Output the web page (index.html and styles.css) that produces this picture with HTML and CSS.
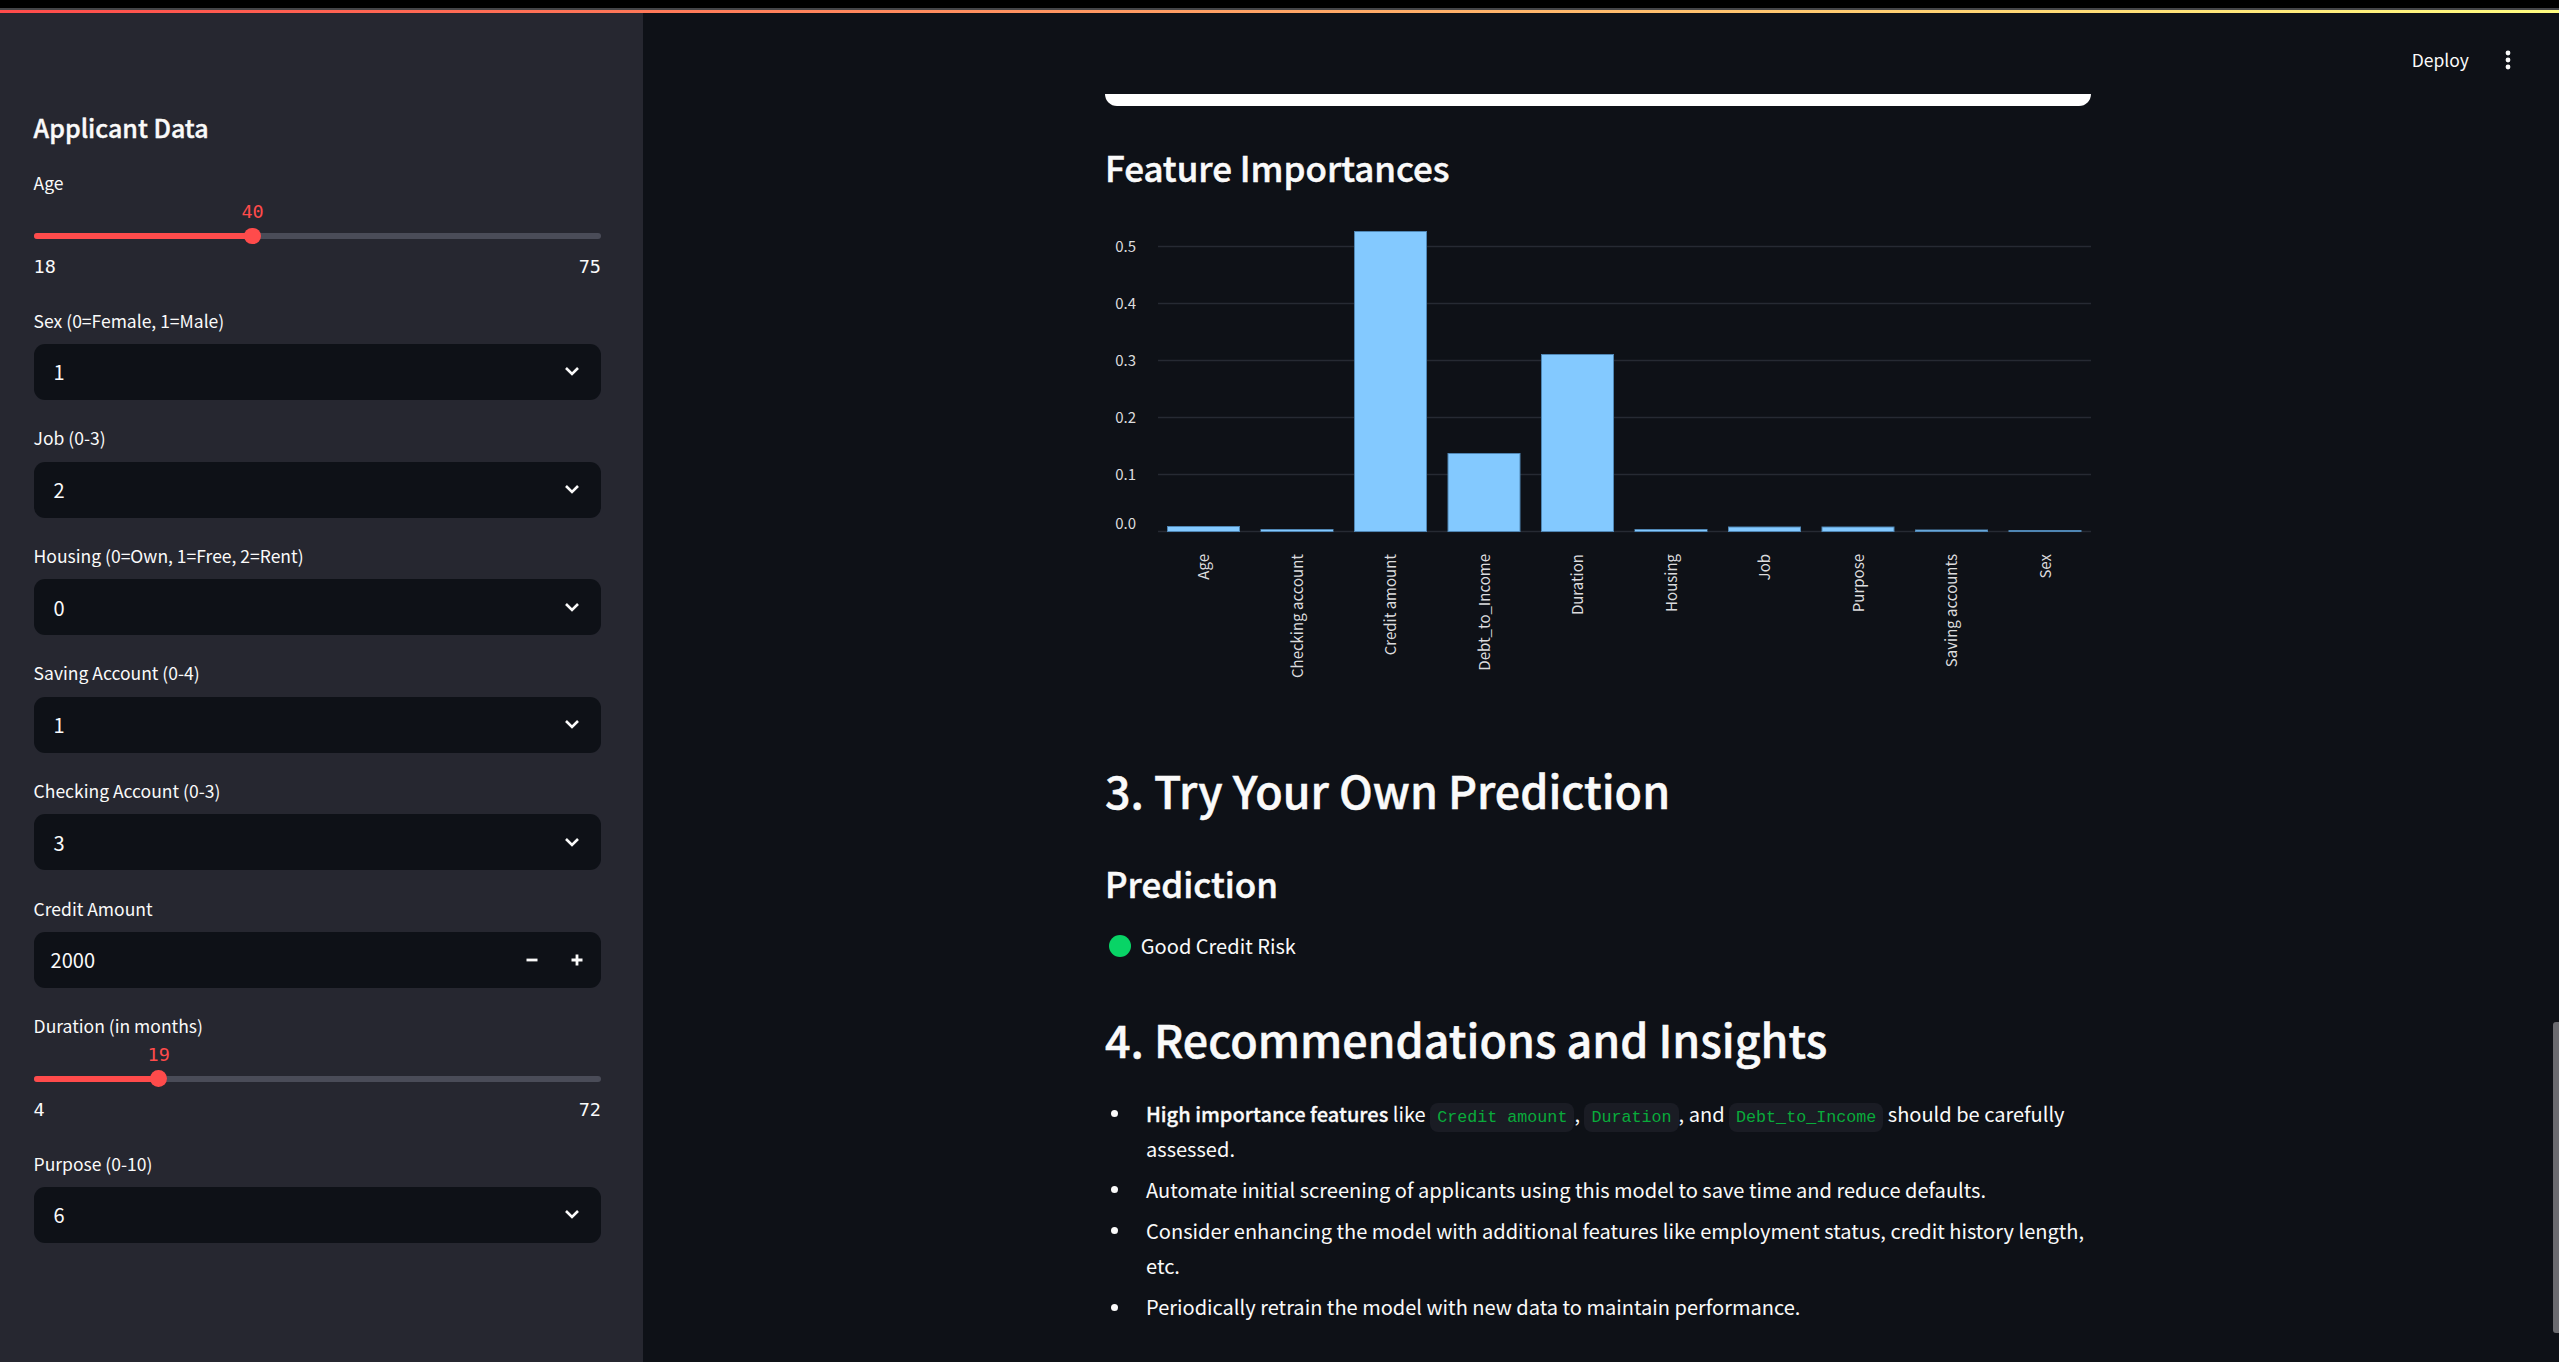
FILE: index.html
```html
<!DOCTYPE html>
<html lang="en">
<head>
<meta charset="utf-8">
<title>Credit Risk</title>
<link rel="stylesheet" href="styles.css">
</head>
<body>
<div class="chrome-line"></div>
<div class="gradient-line"></div>
<div class="app">
  <aside class="sidebar">
    <h2 class="side-title">Applicant Data</h2>
    <div class="field">
      <div class="label">Age</div>
      <div class="slider">
        <div class="track"><div class="fill" style="width:38.6%"></div>
          <div class="thumb" style="left:38.6%"><span class="tick">40</span></div></div>
        <div class="range"><span>18</span><span>75</span></div>
      </div>
    </div>
    <div class="field">
      <div class="label">Sex (0=Female, 1=Male)</div>
      <div class="control select"><span>1</span><svg class="chev" viewBox="0 0 16 10"><path d="M2 2l6 6 6-6"/></svg></div>
    </div>
    <div class="field">
      <div class="label">Job (0-3)</div>
      <div class="control select"><span>2</span><svg class="chev" viewBox="0 0 16 10"><path d="M2 2l6 6 6-6"/></svg></div>
    </div>
    <div class="field">
      <div class="label">Housing (0=Own, 1=Free, 2=Rent)</div>
      <div class="control select"><span>0</span><svg class="chev" viewBox="0 0 16 10"><path d="M2 2l6 6 6-6"/></svg></div>
    </div>
    <div class="field">
      <div class="label">Saving Account (0-4)</div>
      <div class="control select"><span>1</span><svg class="chev" viewBox="0 0 16 10"><path d="M2 2l6 6 6-6"/></svg></div>
    </div>
    <div class="field">
      <div class="label">Checking Account (0-3)</div>
      <div class="control select"><span>3</span><svg class="chev" viewBox="0 0 16 10"><path d="M2 2l6 6 6-6"/></svg></div>
    </div>
    <div class="field">
      <div class="label">Credit Amount</div>
      <div class="control number"><span>2000</span>
        <div class="steppers">
          <svg class="step" viewBox="0 0 12 12"><path d="M0.5 6h11"/></svg>
          <svg class="step" viewBox="0 0 12 12"><path d="M0.5 6h11M6 0.5v11"/></svg>
        </div>
      </div>
    </div>
    <div class="field">
      <div class="label">Duration (in months)</div>
      <div class="slider">
        <div class="track"><div class="fill" style="width:22.06%"></div>
          <div class="thumb" style="left:22.06%"><span class="tick">19</span></div></div>
        <div class="range"><span>4</span><span>72</span></div>
      </div>
    </div>
    <div class="field">
      <div class="label">Purpose (0-10)</div>
      <div class="control select"><span>6</span><svg class="chev" viewBox="0 0 16 10"><path d="M2 2l6 6 6-6"/></svg></div>
    </div>
  </aside>

  <main class="main">
    <div class="toolbar">
      <span class="deploy">Deploy</span>
      <svg class="kebab" viewBox="0 0 6 20"><circle cx="3" cy="3" r="2.4"/><circle cx="3" cy="10" r="2.4"/><circle cx="3" cy="17" r="2.4"/></svg>
    </div>
    <div class="content">
      <div class="table-end"></div>
      <h3 class="h3 h3-feature">Feature Importances</h3>
      <svg class="chart" viewBox="1105 200 986 500" width="986" height="500">
        <g class="grid">
          <line x1="1158" x2="2091" y1="246.5" y2="246.5"/>
          <line x1="1158" x2="2091" y1="303.5" y2="303.5"/>
          <line x1="1158" x2="2091" y1="360.5" y2="360.5"/>
          <line x1="1158" x2="2091" y1="417.5" y2="417.5"/>
          <line x1="1158" x2="2091" y1="474.5" y2="474.5"/>
          <line x1="1158" x2="2091" y1="531.5" y2="531.5"/>
        </g>
        <g class="ylabels">
          <text x="1136" y="252">0.5</text>
          <text x="1136" y="309">0.4</text>
          <text x="1136" y="366">0.3</text>
          <text x="1136" y="423">0.2</text>
          <text x="1136" y="480">0.1</text>
          <text x="1136" y="529">0.0</text>
        </g>
        <g class="bars">
          <rect x="1167.5" y="526.5" width="72" height="5"/>
          <rect x="1261" y="529.5" width="72" height="2"/>
          <rect x="1354.5" y="231.5" width="72" height="300"/>
          <rect x="1448" y="453.5" width="72" height="78"/>
          <rect x="1541.5" y="354.5" width="72" height="177"/>
          <rect x="1635" y="529.5" width="72" height="2"/>
          <rect x="1728.5" y="527" width="72" height="4.5"/>
          <rect x="1822" y="527" width="72" height="4.5"/>
          <rect x="1915.5" y="530" width="72" height="1.5"/>
          <rect x="2009" y="530.5" width="72" height="1"/>
        </g>
        <g class="xlabels">
          <text transform="translate(1209 554) rotate(-90)">Age</text>
          <text transform="translate(1302.5 554) rotate(-90)">Checking account</text>
          <text transform="translate(1396 554) rotate(-90)">Credit amount</text>
          <text transform="translate(1489.5 554) rotate(-90)">Debt_to_Income</text>
          <text transform="translate(1583 554) rotate(-90)">Duration</text>
          <text transform="translate(1676.5 554) rotate(-90)">Housing</text>
          <text transform="translate(1770 554) rotate(-90)">Job</text>
          <text transform="translate(1863.5 554) rotate(-90)">Purpose</text>
          <text transform="translate(1957 554) rotate(-90)">Saving accounts</text>
          <text transform="translate(2050.5 554) rotate(-90)">Sex</text>
        </g>
      </svg>
      <h2 class="h2 h2-try">3. Try Your Own Prediction</h2>
      <h3 class="h3 h3-pred">Prediction</h3>
      <p class="result"><span class="dot"></span>Good Credit Risk</p>
      <h2 class="h2 h2-rec">4. Recommendations and Insights</h2>
      <ul class="list">
        <li><strong>High importance features</strong> like <code>Credit amount</code>, <code>Duration</code>, and <code>Debt_to_Income</code> <span>should be carefully</span> <span>assessed.</span></li>
        <li>Automate initial screening of applicants using this model to save time and reduce defaults.</li>
        <li><span>Consider enhancing the model with additional features like employment status, credit history length,</span> <span>etc.</span></li>
        <li>Periodically retrain the model with new data to maintain performance.</li>
      </ul>
    </div>
  </main>
  <div class="scrollbar"><div class="scroll-thumb"></div></div>
</div>
</body>
</html>
```

FILE: styles.css
```css
* { box-sizing: border-box; }
html, body { margin: 0; height: 100%; }
body {
  background: #000;
  color: #fafafa;
  font-family: "Noto Sans CJK SC", "Noto Sans", sans-serif;
  font-size: 20.05px;
  overflow: hidden;
  padding-top: 8px;
  display: flex;
  flex-direction: column;
}
.chrome-line { height: 2px; background: #444548; flex: none; }
.gradient-line { height: 3px; flex: none; background: linear-gradient(90deg, #ff4b4b, #fffd80); }
.app { flex: 1; display: flex; min-height: 0; background: #0e1117; }

.sidebar {
  flex: none;
  width: 643px;
  background: #262730;
  padding: 89px 42px 0 33.6px;
  overflow: hidden;
}
.side-title {
  margin: 0 0 15.4px;
  font-size: 25px;
  line-height: 50px;
  font-weight: 500;
  -webkit-text-stroke: 0.4px #fafafa;
}
.field { margin-bottom: 22.4px; }
.label {
  font-size: 17.5px;
  line-height: 32px;
  height: 39.2px;
}
.field:has(.slider) .label { height: 35.2px; }
.slider { padding: 30.4px 0 1.4px; }
.track { position: relative; height: 6px; border-radius: 3px; background: #4a4c58; }
.fill { height: 100%; border-radius: 3px; background: #ff4b4b; }
.thumb {
  position: absolute;
  top: -5.4px;
  width: 16.8px;
  height: 16.8px;
  margin-left: -8.4px;
  border-radius: 50%;
  background: #ff4b4b;
}
.tick {
  position: absolute;
  left: 50%;
  bottom: 18px;
  transform: translateX(-50%);
  font-family: "DejaVu Sans Mono", monospace;
  font-size: 18.5px;
  line-height: 28px;
  color: #ff4b4b;
}
.range {
  display: flex;
  justify-content: space-between;
  margin-top: 14px;
  font-family: "DejaVu Sans Mono", monospace;
  font-size: 18.5px;
  line-height: 28px;
}
.control {
  height: 56px;
  border-radius: 11px;
  background: #0e1117;
  display: flex;
  align-items: center;
  justify-content: space-between;
  line-height: 29px;
}
.select { padding: 0 21.5px 0 20px; }
.chev { width: 16px; height: 10px; fill: none; stroke: #fafafa; stroke-width: 2.6; margin-top: -1px; }
.number { padding: 0 18px 0 17px; }
.steppers { display: flex; gap: 33px; align-items: center; }
.step { width: 12px; height: 12px; fill: none; stroke: #fafafa; stroke-width: 2.8; }

.main { flex: 1; min-width: 0; position: relative; overflow: hidden; }
.toolbar {
  position: absolute;
  top: 28px;
  right: 0;
  display: flex;
  align-items: center;
  gap: 36px;
}
.deploy { font-size: 17.5px; line-height: 38px; }
.kebab { width: 6px; height: 20px; fill: #fafafa; margin-right: 42px; }
.content { width: 986px; margin: 0 auto; padding-top: 81px; }
.table-end { height: 12px; background: #fff; border-radius: 0 0 14px 14px; }
.h3, .h2 { margin: 0; font-weight: 500; -webkit-text-stroke: 0.5px #fafafa; }
.h3 { font-size: 34.9px; line-height: 54px; }
.h2 { font-size: 44.8px; line-height: 70px; }
.h3-feature { margin-top: 34px; }
.chart { display: block; margin-top: 6px; }
.grid line { stroke: #262a33; stroke-width: 1.4; }
.ylabels text { font-size: 15px; fill: #dcdcde; text-anchor: end; }
.bars rect { fill: #83c9ff; stroke: #4f86b4; stroke-width: 1; }
.xlabels text { font-size: 15px; fill: #dcdcde; text-anchor: end; }
.h2-try { margin-top: 55px; }
.h3-pred { margin-top: 31px; }
.result { margin: 18px 0 0; line-height: 36px; display: flex; align-items: center; }
.dot { width: 22px; height: 22px; border-radius: 50%; background: #08d466; margin: 0 9.5px 0 4.3px; }
.h2-rec { margin-top: 40px; }
.list { margin: 21.5px 0 0; padding: 0 0 0 41px; list-style: none; }
.list li { position: relative; line-height: 35.84px; margin-bottom: 4.8px; }
.list li::before {
  content: "";
  position: absolute;
  left: -35.5px;
  top: 14.5px;
  width: 7px;
  height: 7px;
  border-radius: 50%;
  background: #fafafa;
}
strong { font-weight: 500; -webkit-text-stroke: 0.3px #fafafa; }
code {
  font-family: "Liberation Mono", monospace;
  font-size: 16.7px;
  line-height: 1;
  color: #09ab3b;
  background: #1a1c24;
  border-radius: 8px;
  padding: 5px 7px;
}
.scrollbar { flex: none; width: 6px; }
.scroll-thumb { margin-top: 1009px; height: 311px; background: #6b6b70; border-radius: 3px 0 0 3px; }
```
